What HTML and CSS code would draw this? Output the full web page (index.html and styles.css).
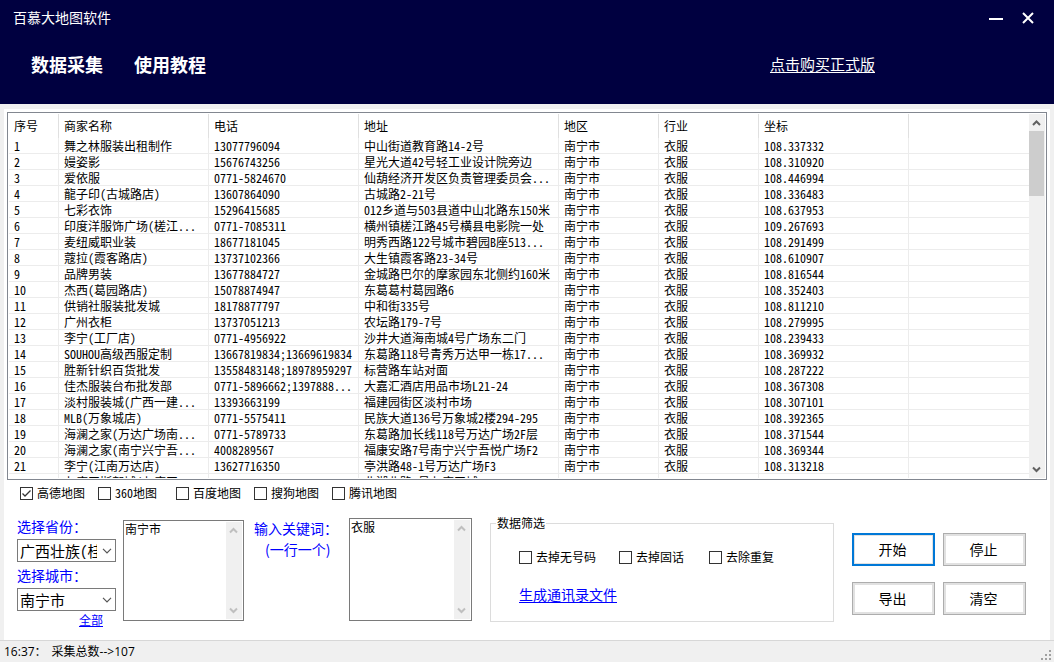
FILE: index.html
```html
<!DOCTYPE html>
<html lang="zh-CN">
<head>
<meta charset="utf-8">
<title>百慕大地图软件</title>
<link rel="stylesheet" href="styles.css">
</head>
<body>
<header class="header">
  <div class="titlebar">
    <h1 class="title">百慕大地图软件</h1>
    <button class="win-btn" type="button" aria-label="最小化"><svg width="14" height="14" viewBox="0 0 14 14"><path d="M0 8H14" stroke="#fff" stroke-width="2"/></svg></button>
    <button class="win-btn" type="button" aria-label="关闭"><svg width="12" height="12" viewBox="0 0 12 12"><path d="M1 1L11 11M11 1L1 11" stroke="#fff" stroke-width="2"/></svg></button>
  </div>
  <nav class="nav">
    <button class="tab" type="button">数据采集</button>
    <button class="tab" type="button">使用教程</button>
    <a class="buy" href="#">点击购买正式版</a>
  </nav>
</header>
<main class="panel">
  <section class="list">
    <div class="list-view">
      <table class="grid">
        <colgroup><col class="c50"><col class="c150"><col class="c150"><col class="c200"><col class="c100"><col class="c100"><col class="c150"><col></colgroup>
        <thead><tr><th>序号</th><th>商家名称</th><th>电话</th><th>地址</th><th>地区</th><th>行业</th><th>坐标</th><th></th></tr></thead>
        <tbody>
          <tr><td>1</td><td>舞之林服装出租制作</td><td>13077796094</td><td>中山街道教育路14-2号</td><td>南宁市</td><td>衣服</td><td>108.337332</td><td></td></tr>
          <tr><td>2</td><td>嫚姿影</td><td>15676743256</td><td>星光大道42号轻工业设计院旁边</td><td>南宁市</td><td>衣服</td><td>108.310920</td><td></td></tr>
          <tr><td>3</td><td>爱依服</td><td>0771-5824670</td><td>仙葫经济开发区负责管理委员会...</td><td>南宁市</td><td>衣服</td><td>108.446994</td><td></td></tr>
          <tr><td>4</td><td>龍子印(古城路店)</td><td>13607864090</td><td>古城路2-21号</td><td>南宁市</td><td>衣服</td><td>108.336483</td><td></td></tr>
          <tr><td>5</td><td>七彩衣饰</td><td>15296415685</td><td>012乡道与503县道中山北路东150米</td><td>南宁市</td><td>衣服</td><td>108.637953</td><td></td></tr>
          <tr><td>6</td><td>印度洋服饰广场(槎江...</td><td>0771-7085311</td><td>横州镇槎江路45号横县电影院一处</td><td>南宁市</td><td>衣服</td><td>109.267693</td><td></td></tr>
          <tr><td>7</td><td>麦纽威职业装</td><td>18677181045</td><td>明秀西路122号城市碧园B座513...</td><td>南宁市</td><td>衣服</td><td>108.291499</td><td></td></tr>
          <tr><td>8</td><td>蔻拉(霞客路店)</td><td>13737102366</td><td>大生镇霞客路23-34号</td><td>南宁市</td><td>衣服</td><td>108.610907</td><td></td></tr>
          <tr><td>9</td><td>品牌男装</td><td>13677884727</td><td>金城路巴尔的摩家园东北侧约160米</td><td>南宁市</td><td>衣服</td><td>108.816544</td><td></td></tr>
          <tr><td>10</td><td>杰西(葛园路店)</td><td>15078874947</td><td>东葛葛村葛园路6</td><td>南宁市</td><td>衣服</td><td>108.352403</td><td></td></tr>
          <tr><td>11</td><td>供销社服装批发城</td><td>18178877797</td><td>中和街335号</td><td>南宁市</td><td>衣服</td><td>108.811210</td><td></td></tr>
          <tr><td>12</td><td>广州衣柜</td><td>13737051213</td><td>农坛路179-7号</td><td>南宁市</td><td>衣服</td><td>108.279995</td><td></td></tr>
          <tr><td>13</td><td>李宁(工厂店)</td><td>0771-4956922</td><td>沙井大道海南城4号广场东二门</td><td>南宁市</td><td>衣服</td><td>108.239433</td><td></td></tr>
          <tr><td>14</td><td>SOUHOU高级西服定制</td><td>13667819834;13669619834</td><td>东葛路118号青秀万达甲一栋17...</td><td>南宁市</td><td>衣服</td><td>108.369932</td><td></td></tr>
          <tr><td>15</td><td>胜新针织百货批发</td><td>13558483148;18978959297</td><td>标营路车站对面</td><td>南宁市</td><td>衣服</td><td>108.287222</td><td></td></tr>
          <tr><td>16</td><td>佳杰服装台布批发部</td><td>0771-5896662;1397888...</td><td>大嘉汇酒店用品市场L21-24</td><td>南宁市</td><td>衣服</td><td>108.367308</td><td></td></tr>
          <tr><td>17</td><td>淡村服装城(广西一建...</td><td>13393663199</td><td>福建园街区淡村市场</td><td>南宁市</td><td>衣服</td><td>108.307101</td><td></td></tr>
          <tr><td>18</td><td>MLB(万象城店)</td><td>0771-5575411</td><td>民族大道136号万象城2楼294-295</td><td>南宁市</td><td>衣服</td><td>108.392365</td><td></td></tr>
          <tr><td>19</td><td>海澜之家(万达广场南...</td><td>0771-5789733</td><td>东葛路加长线118号万达广场2F层</td><td>南宁市</td><td>衣服</td><td>108.371544</td><td></td></tr>
          <tr><td>20</td><td>海澜之家(南宁兴宁吾...</td><td>4008289567</td><td>福康安路7号南宁兴宁吾悦广场F2</td><td>南宁市</td><td>衣服</td><td>108.369344</td><td></td></tr>
          <tr><td>21</td><td>李宁(江南万达店)</td><td>13627716350</td><td>亭洪路48-1号万达广场F3</td><td>南宁市</td><td>衣服</td><td>108.313218</td><td></td></tr>
          <tr><td></td><td>七度工斯部城(七度工</td><td></td><td>北湖北路4号七度工城</td><td></td><td></td><td></td><td></td></tr>
        </tbody>
      </table>
    </div>
    <div class="scroll">
      <svg class="arrow" viewBox="0 0 15 17"><path d="M4 11L7.500 7.500L11 11" fill="none" stroke="#606060" stroke-width="2"/></svg>
      <span class="thumb"></span>
      <svg class="arrow" viewBox="0 0 15 17"><path d="M4 6.500L7.500 10L11 6.500" fill="none" stroke="#606060" stroke-width="2"/></svg>
    </div>
  </section>
  <div class="sources">
    <label class="check"><input type="checkbox" checked>高德地图</label>
    <label class="check"><input type="checkbox">360地图</label>
    <label class="check"><input type="checkbox">百度地图</label>
    <label class="check"><input type="checkbox">搜狗地图</label>
    <label class="check"><input type="checkbox">腾讯地图</label>
  </div>
  <section class="controls">
    <div class="region">
      <label class="blue" for="province">选择省份：</label>
      <div class="combo"><select id="province"><option>广西壮族(桂)</option></select><svg class="chev" viewBox="0 0 10 6"><path d="M1 .8L5 4.800L9 .8" fill="none" stroke="#555" stroke-width="1.200"/></svg></div>
      <label class="blue" for="city">选择城市：</label>
      <div class="combo"><select id="city"><option>南宁市</option></select><svg class="chev" viewBox="0 0 10 6"><path d="M1 .8L5 4.800L9 .8" fill="none" stroke="#555" stroke-width="1.200"/></svg></div>
      <a class="all" href="#">全部</a>
    </div>
    <div class="memo cities">
      <textarea aria-label="城市列表">南宁市</textarea>
      <div class="scroll">
        <svg class="arrow" viewBox="0 0 15 17"><path d="M4 10.500L7.500 7L11 10.500" fill="none" stroke="#bfbfbf" stroke-width="2"/></svg>
        <svg class="arrow" viewBox="0 0 15 17"><path d="M4 6.500L7.500 10L11 6.500" fill="none" stroke="#bfbfbf" stroke-width="2"/></svg>
      </div>
    </div>
    <label class="blue keyword" for="keywords">输入关键词：<span>(一行一个)</span></label>
    <div class="memo words">
      <textarea id="keywords">衣服</textarea>
      <div class="scroll">
        <svg class="arrow" viewBox="0 0 15 17"><path d="M4 10.500L7.500 7L11 10.500" fill="none" stroke="#bfbfbf" stroke-width="2"/></svg>
        <svg class="arrow" viewBox="0 0 15 17"><path d="M4 6.500L7.500 10L11 6.500" fill="none" stroke="#bfbfbf" stroke-width="2"/></svg>
      </div>
    </div>
    <fieldset class="filter">
      <legend>数据筛选</legend>
      <div class="filter-checks">
        <label class="check"><input type="checkbox">去掉无号码</label>
        <label class="check"><input type="checkbox">去掉固话</label>
        <label class="check"><input type="checkbox">去除重复</label>
      </div>
      <a class="export" href="#">生成通讯录文件</a>
    </fieldset>
    <div class="actions">
      <button class="btn primary" type="button">开始</button>
      <button class="btn" type="button">停止</button>
      <button class="btn" type="button">导出</button>
      <button class="btn" type="button">清空</button>
    </div>
  </section>
</main>
<footer class="status">
  <span>16:37：</span><span>采集总数--&gt;107</span>
  <svg class="grip" width="12" height="12" viewBox="0 0 12 12" fill="#a0a0a0"><path d="M8 0h2v2h-2zM4 4h2v2h-2zM8 4h2v2h-2zM0 8h2v2h-2zM4 8h2v2h-2zM8 8h2v2h-2z"/></svg>
</footer>
</body>
</html>
```
FILE: styles.css
```css
* { box-sizing: border-box; }

body {
  margin: 0;
  height: 100vh;
  display: flex;
  flex-direction: column;
  background: #f0f0f0;
  color: #000;
  font: 12px/16px "Noto Sans CJK SC", sans-serif;
}

button, select, textarea { font-family: inherit; color: inherit; }

.header { height: 104px; flex: none; background: #000040; color: #fff; }
.titlebar { display: flex; align-items: center; height: 36px; padding: 0 20px 0 13px; gap: 16px; }
.title { margin: 0; padding-bottom: 2px; flex: 1; font-size: 14px; font-weight: 400; line-height: 20px; }
.win-btn { display: flex; align-items: center; justify-content: center; width: 16px; height: 20px; padding: 0; border: 0; background: none; }
.win-btn + .win-btn { width: 12px; margin-left: 2px; }
.nav { display: flex; align-items: center; height: 56px; padding: 0 179px 0 31px; gap: 31px; }
.tab { padding: 0; border: 0; background: none; font-size: 18px; line-height: 24px; font-weight: 700; color: #fff; }
.buy { margin-left: auto; color: #fff; font-size: 15px; line-height: 20px; text-underline-offset: 2px; }

.panel { flex: 1; min-height: 0; display: flex; flex-direction: column; margin: 5px 4px 0; padding: 3px; background: #fff; }

.list { flex: 1; min-height: 0; display: flex; border: 1px solid #828790; padding: 1px; font-feature-settings: "hwid"; }
.list-view { flex: 1; min-width: 0; overflow: hidden; }
.grid { width: 100%; table-layout: fixed; border-collapse: separate; border-spacing: 0; }
.c50 { width: 50px; }
.c100 { width: 100px; }
.c150 { width: 150px; }
.c200 { width: 200px; }
.grid th, .grid td { padding: 0 0 0 5px; text-align: left; font-weight: 400; white-space: nowrap; overflow: hidden; border-right: 1px solid #ececec; }
.grid th { height: 24px; border-color: #e0e0e0; }
.grid td { height: 16px; line-height: 15px; border-bottom: 1px solid #ececec; }
.grid th:last-child, .grid td:last-child { border-right: 0; }

.scroll { width: 16px; flex: none; display: flex; flex-direction: column; background: #f0f0f0; }
.arrow { width: 15px; height: 17px; flex: none; }
.arrow:last-child { margin-top: auto; }
.thumb { width: 15px; height: 65px; background: #cdcdcd; }

.sources { display: flex; height: 26px; padding-left: 13px; align-items: center; }
.sources .check { width: 78px; }
.check { display: flex; align-items: center; gap: 4px; white-space: nowrap; font-feature-settings: "hwid"; }
.check input { appearance: none; width: 13px; height: 13px; margin: 0; border: 1px solid #333; background: #fff; }
.check input:checked { background: #fff url("data:image/svg+xml,%3Csvg xmlns='http://www.w3.org/2000/svg' viewBox='0 0 11 11'%3E%3Cpath d='M1.500 5.500L4 8L9.500 2.500' fill='none' stroke='%23333' stroke-width='1.300'/%3E%3C/svg%3E"); }

.controls { display: flex; align-items: flex-start; height: 131px; padding: 12px 17px 0 10px; }
.blue { color: #00f; font-size: 14px; line-height: 18px; }
.region { width: 99px; display: flex; flex-direction: column; margin-top: -1px; }
.combo { position: relative; height: 23px; margin: 4px 0; }
.combo select { appearance: none; width: 100%; height: 100%; padding: 0 18px 2px 2px; border: 1px solid #7a7a7a; border-radius: 0; background: #fff; font-size: 15px; font-feature-settings: "hwid"; }
.chev { position: absolute; right: 4px; top: 9px; width: 10px; height: 6px; pointer-events: none; }
.all { align-self: flex-end; margin: -2px 13px 0 0; line-height: 14px; color: #00f; }
.memo { display: flex; padding: 1px; border: 1px solid #7a7a7a; background: #fff; }
.memo textarea { flex: 1; min-width: 0; padding: 0; border: 0; resize: none; overflow: hidden; background: none; font-size: 12px; line-height: 14px; }
.cities { width: 121px; height: 101px; margin: 2px 0 0 7px; }
.words { width: 123px; height: 103px; }
.keyword { width: 95px; margin-left: 10px; line-height: 21px; white-space: nowrap; }
.keyword span { display: block; padding-left: 11px; }

.filter { flex: 1; min-width: 0; height: 107px; margin: -3px 0 0 18px; padding: 18px 0 0 28px; border: 1px solid #dcdcdc; }
.filter legend { margin-left: -23px; padding: 0 1px; }
.filter-checks { display: grid; grid-template-columns: 100px 90px auto; }
.export { display: inline-block; margin-top: 19px; color: #00f; font-size: 14px; line-height: 20px; text-underline-offset: 2px; }
.actions { display: grid; grid-template-columns: 83px 83px; gap: 16px 8px; margin: 15px 0 0 18px; padding-right: 4px; }
.btn { height: 33px; padding: 0 2px 2px 0; border: 1px solid #adadad; box-shadow: inset 0 0 0 2px #e1e1e1; background: #fff; font-size: 14px; }
.primary { border: 2px solid #0078d7; box-shadow: inset 0 0 0 1px #e1e1e1; }

.status { display: flex; align-items: center; height: 22px; flex: none; gap: 5px; padding: 0 1px 0 4px; border-top: 1px solid #d7d7d7; font-family: "Open Sans", "Noto Sans CJK SC", sans-serif; }
.grip { margin-left: auto; align-self: flex-end; }
```
